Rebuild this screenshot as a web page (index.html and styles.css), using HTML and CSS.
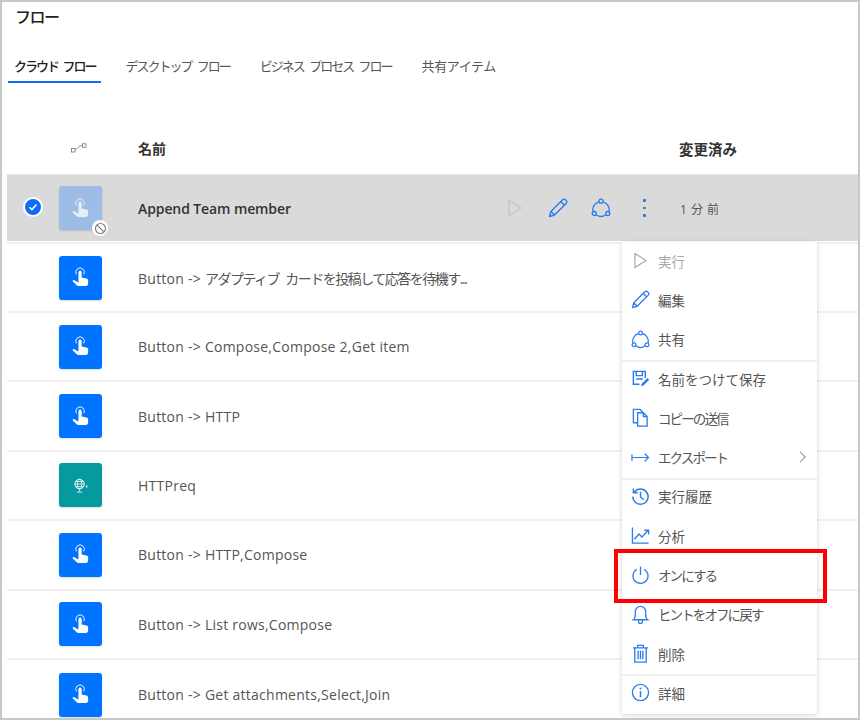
FILE: index.html
```html
<!DOCTYPE html>
<html lang="ja">
<head>
<meta charset="utf-8">
<title>フロー</title>
<link rel="stylesheet" href="styles.css">
</head>
<body>
<svg class="defs" width="0" height="0" aria-hidden="true">
  <defs>
    <symbol id="hand" viewBox="0 0 20 24">
      <path d="M5.200 8.300a5 5 0 1 1 8.600 0" fill="none" stroke="currentColor" stroke-width="1.100"/>
      <path d="M7.600 5.800a1.900 1.900 0 0 1 3.800 0v6.100l5.600 1.400c1.300.4 2 1.200 2 2.500v3.400c0 1.600-1 2.800-2.600 2.800H7.200c-1 0-1.700-.6-2.200-1.400L1 16.700c-.7-1.100.5-2.300 1.700-1.500l4.900 2.800z" fill="currentColor"/>
    </symbol>
    <symbol id="play" viewBox="0 0 16 20"><path d="M2 2.500v15L14 10z" fill="none" stroke="currentColor" stroke-width="1.300" stroke-linejoin="round"/></symbol>
    <symbol id="pencil" viewBox="0 0 20 20"><path d="M1.500 18.500l1.400-5L14.600 1.800a2 2 0 0 1 2.900 0l.7.7a2 2 0 0 1 0 2.900L6.500 17.100zM12.800 3.600l3.600 3.600M2.900 13.500l3.600 3.600" fill="none" stroke="currentColor" stroke-width="1.400" stroke-linejoin="round"/></symbol>
    <symbol id="share" viewBox="0 0 20 20"><circle cx="10" cy="3.200" r="2" fill="none" stroke="currentColor" stroke-width="1.300"/><circle cx="3.200" cy="15.500" r="2" fill="none" stroke="currentColor" stroke-width="1.300"/><circle cx="16.800" cy="15.500" r="2" fill="none" stroke="currentColor" stroke-width="1.300"/><path d="M7.900 3.900A8 8 0 0 0 2.100 13.700M12.100 3.900a8 8 0 0 1 5.800 9.800M5.200 16.700a8 8 0 0 0 9.600 0" fill="none" stroke="currentColor" stroke-width="1.300"/></symbol>
  </defs>
</svg>
<main class="page">
  <h1 class="title">フロー</h1>
  <nav class="tabs">
    <span class="tab active">クラウド フロー</span>
    <span class="tab">デスクトップ フロー</span>
    <span class="tab">ビジネス プロセス フロー</span>
    <span class="tab shared">共有アイテム</span>
  </nav>
  <div class="head">
    <svg class="flow-glyph" viewBox="0 0 16 10" aria-hidden="true"><rect x=".5" y="5.500" width="3.500" height="3.500" fill="none" stroke="currentColor" stroke-width=".8"/><rect x="11.500" y=".8" width="3.500" height="3.500" fill="none" stroke="currentColor" stroke-width=".8"/><path d="M4 6.500C7 6 7 2.500 11.500 2.500" fill="none" stroke="currentColor" stroke-width=".8"/></svg>
    <span class="head-name">名前</span>
    <span class="head-mod">変更済み</span>
  </div>
  <section class="rows">
    <div class="row selected">
      <span class="check"><svg viewBox="0 0 12 12" aria-hidden="true"><path d="M2.500 6.300l2.400 2.300 4.600-5" fill="none" stroke="#fff" stroke-width="1.500"/></svg></span>
      <span class="tile faded"><svg class="hand"><use href="#hand"/></svg>
        <span class="off"><svg viewBox="0 0 12 12" aria-hidden="true"><circle cx="6" cy="6" r="4.600" fill="none" stroke="#777" stroke-width="1"/><path d="M2.800 2.800l6.400 6.400" stroke="#777" stroke-width="1"/></svg></span>
      </span>
      <span class="name strong">Append Team member</span>
      <span class="actions">
        <svg class="act play-off"><use href="#play"/></svg>
        <svg class="act blue"><use href="#pencil"/></svg>
        <svg class="act blue"><use href="#share"/></svg>
        <span class="dots"><i></i><i></i><i></i></span>
      </span>
      <span class="time">1 分 前</span>
    </div>
    <div class="row"><span class="tile"><svg class="hand"><use href="#hand"/></svg></span><span class="name">Button -&gt; <span class="kana">アダプティブ カードを投稿して応答を待機す...</span></span></div>
    <div class="row"><span class="tile"><svg class="hand"><use href="#hand"/></svg></span><span class="name">Button -&gt; Compose,Compose 2,Get item</span></div>
    <div class="row"><span class="tile"><svg class="hand"><use href="#hand"/></svg></span><span class="name">Button -&gt; HTTP</span></div>
    <div class="row"><span class="tile teal"><svg class="globe" viewBox="0 0 18 18" aria-hidden="true"><circle cx="8" cy="7.500" r="5" fill="none" stroke="currentColor"/><ellipse cx="8" cy="7.500" rx="2.200" ry="5" fill="none" stroke="currentColor" stroke-width=".8"/><path d="M3 7.500h10M3.800 4.800h8.400M3.800 10.200h8.400M8 12.500v3.200M5 16h6" fill="none" stroke="currentColor" stroke-width=".8"/><circle cx="15.500" cy="10" r="1" fill="currentColor"/></svg></span><span class="name">HTTPreq</span></div>
    <div class="row"><span class="tile"><svg class="hand"><use href="#hand"/></svg></span><span class="name">Button -&gt; HTTP,Compose</span></div>
    <div class="row"><span class="tile"><svg class="hand"><use href="#hand"/></svg></span><span class="name">Button -&gt; List rows,Compose</span></div>
    <div class="row last"><span class="tile"><svg class="hand"><use href="#hand"/></svg></span><span class="name">Button -&gt; Get attachments,Select,Join</span></div>
  </section>
  <div class="menu">
    <div class="group">
      <div class="item disabled"><svg class="mi"><use href="#play"/></svg>実行</div>
      <div class="item"><svg class="mi"><use href="#pencil"/></svg>編集</div>
      <div class="item"><svg class="mi"><use href="#share"/></svg>共有</div>
    </div>
    <div class="group">
      <div class="item"><svg class="mi" viewBox="0 0 20 20"><path d="M9 16H2.500V2.500h12.500v7M5.500 2.500v4.500h6.500V2.500M5.500 10.500h7" fill="none" stroke="currentColor" stroke-width="1.500"/><path d="M10.500 18l.7-2.600 6-6 1.900 1.900-6 6z" fill="currentColor"/></svg>名前をつけて保存</div>
      <div class="item tight"><svg class="mi" viewBox="0 0 20 20"><path d="M6.500 15.500H2.500V1.500h7l3 3M7 5h6l4 4v10H7zM13 5v4h4" fill="none" stroke="currentColor" stroke-width="1.400"/></svg>コピーの送信</div>
      <div class="item tight"><svg class="mi" viewBox="0 0 20 20"><path d="M1 6.500v7M1.500 10h17M14.500 6l4 4-4 4" fill="none" stroke="currentColor" stroke-width="1.300"/></svg>エクスポート<svg class="chev" viewBox="0 0 10 16" aria-hidden="true"><path d="M2 2l6 6-6 6" fill="none" stroke="currentColor" stroke-width="1.200"/></svg></div>
    </div>
    <div class="group">
      <div class="item"><svg class="mi" viewBox="0 0 20 20"><path d="M3.500 5.500A8 8 0 1 1 2 10M2.500 1.500v4.500H7M10 5v5.500l3.500 3" fill="none" stroke="currentColor" stroke-width="1.500"/></svg>実行履歴</div>
      <div class="item"><svg class="mi" viewBox="0 0 20 20"><path d="M1.500 1.500v16.500h17M3.500 14l5-5.500 3 3 6.500-7M14 4.500h4.500V9" fill="none" stroke="currentColor" stroke-width="1.400"/></svg>分析</div>
      <div class="item tight"><svg class="mi" viewBox="0 0 20 20"><path d="M6 3.500a8 8 0 1 0 8 0M10 .5v9" fill="none" stroke="currentColor" stroke-width="1.400"/></svg>オンにする</div>
      <div class="item tight"><svg class="mi" viewBox="0 0 20 20"><path d="M2.500 15.500c1.500-1 2-2.500 2-4.500V7a5.500 5.500 0 0 1 11 0v4c0 2 .5 3.500 2 4.500zM8 16v1.500a2 2 0 0 0 4 0V16" fill="none" stroke="currentColor" stroke-width="1.400"/></svg>ヒントをオフに戻す</div>
      <div class="item"><svg class="mi" viewBox="0 0 20 20"><path d="M2 4h16M7 4V1.500h6V4M4 4v15h12V4M7.500 7v9M10 7v9M12.500 7v9" fill="none" stroke="currentColor" stroke-width="1.400"/></svg>削除</div>
    </div>
    <div class="group">
      <div class="item"><svg class="mi" viewBox="0 0 20 20"><circle cx="10" cy="10" r="8.500" fill="none" stroke="currentColor" stroke-width="1.400"/><path d="M10 8.500V15" stroke="currentColor" stroke-width="1.600"/><circle cx="10" cy="5.800" r="1.100" fill="currentColor"/></svg>詳細</div>
    </div>
  </div>
  <div class="callout"></div>
</main>
</body>
</html>
```
FILE: styles.css
```css
* { box-sizing: border-box; }
html, body { margin: 0; padding: 0; background: #fff; }
body { width: 860px; height: 720px; overflow: hidden; font-family: "Open Sans", "Noto Sans CJK JP", sans-serif; }
.defs { position: absolute; }
.page {
  position: relative;
  width: 860px;
  height: 720px;
  border: 2px solid #c8c8c8;
  overflow: hidden;
  color: #444;
  padding-left: 5px;
}
.title { margin: 0; padding: 3px 0 0 8px; font-size: 16px; line-height: 24px; font-weight: 500; color: #222; letter-spacing: -1.500px; }
.tabs { display: flex; margin-top: 24px; margin-left: 1px; height: 30px; }
.tab { padding: 0 6px; margin-right: 18px; font-size: 13px; line-height: 26px; color: #555; white-space: nowrap; letter-spacing: -2px; word-spacing: 4px; }
.tab.active { color: #222; font-weight: 500; border-bottom: 2px solid #0f6cf5; height: 30px; letter-spacing: -2px; word-spacing: 3px; }
.tab.shared { letter-spacing: -.4px; }
.head { display: flex; align-items: center; height: 36px; margin-top: 47px; font-size: 14px; font-weight: 700; color: #333; position: relative; }
.flow-glyph { width: 16px; height: 10px; color: #777; margin-left: 64px; }
.head-name { margin-left: 51px; }
.head-mod { margin-left: 513px; font-size: 14.500px; }
.rows { width: 851px; margin-top: 8px; }
.row { display: flex; align-items: center; height: 69.400px; border-bottom: 2px solid #f0f0f0; position: relative; font-size: 14px; color: #555; padding-left: 52px; }
.row.last { border-bottom: 0; }
.row.selected { background: #dadada; height: 67px; border-top: 1px solid #e4e4e4; border-bottom: 0; margin-bottom: 1px; color: #333; }
.row.selected + .row { height: 71px; border-top: 2px solid #f0f0f0; }
.tile { flex: none; width: 43px; height: 44px; border-radius: 3px; background: #0073ff; color: #fff; display: flex; align-items: center; justify-content: center; position: relative; box-shadow: 0 1px 2px rgba(0,0,0,.15); }
.tile.faded { background: #9dbde7; color: #e8eef6; }
.tile.teal { background: #069a9e; }
.hand { width: 17px; height: 23px; }
.globe { width: 17px; height: 17px; }
.off { position: absolute; right: -6px; bottom: -6px; width: 16px; height: 16px; border-radius: 50%; background: #fff; display: flex; align-items: center; justify-content: center; }
.off svg { width: 13px; height: 13px; }
.name { margin-left: 36px; white-space: nowrap; letter-spacing: .25px; }
.name.strong { font-weight: 600; color: #333; letter-spacing: -.1px; }
.kana { letter-spacing: -1.500px; word-spacing: 4px; }
.check { position: absolute; left: 16px; top: 22px; width: 20px; height: 20px; border-radius: 50%; background: #0f6cf5; border: 2px solid #fff; display: flex; align-items: center; justify-content: center; }
.check svg { width: 12px; height: 12px; }
.actions { position: absolute; left: 500px; top: 22px; display: flex; align-items: center; height: 22px; }
.act { width: 20px; height: 20px; margin-right: 23px; }
.act.play-off { color: #c4c4c4; width: 16px; height: 20px; margin-right: 25px; }
.blue { color: #2b7cf0; }
.dots { display: flex; flex-direction: column; gap: 5px; margin-left: 9px; }
.dots i { display: block; width: 2.500px; height: 2.500px; background: #2b6fd6; border-radius: 50%; }
.time { position: absolute; left: 673px; top: 25px; font-size: 12px; letter-spacing: .500px; color: #555; }
.menu {
  position: absolute;
  left: 620px;
  top: 240px;
  width: 195px;
  height: 472px;
  background: #fff;
  box-shadow: 0 1px 5px rgba(0,0,0,.18);
  font-size: 13.500px;
  color: #555;
}
.group + .group { box-shadow: inset 0 2px 0 #f0f0f0; }
.item { display: flex; align-items: center; height: 39.300px; padding: 0 0 2px 9px; position: relative; }
.item.disabled { color: #a9a9a9; }
.item.tight { letter-spacing: -1.900px; }
.mi { width: 19px; height: 19px; margin-right: 8px; color: #2b7cf0; flex: none; }
.item.disabled .mi { color: #a9a9a9; width: 15px; margin-left: 2px; margin-right: 10px; }
.chev { position: absolute; right: 10px; width: 9px; height: 14px; color: #888; }
.callout { position: absolute; left: 612px; top: 547px; width: 213px; height: 54px; border: 4px solid #f00; }
```
